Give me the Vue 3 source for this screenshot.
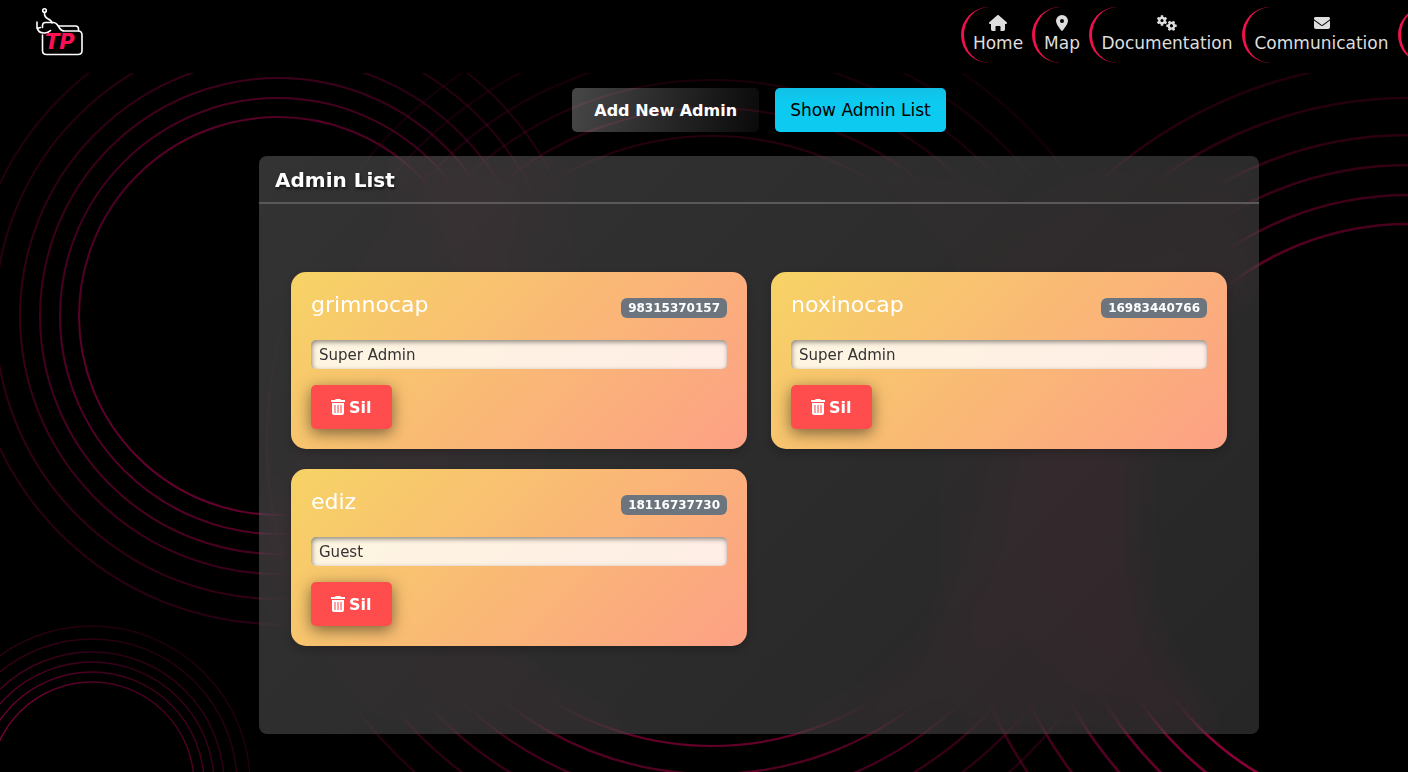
<script setup>
import { ref } from 'vue'

const rings = [
  { cx: 278, cy: 316, w: 2, paint: 'url(#glow-left)', radii: [199, 218, 238, 258, 283, 308] },
  { cx: 92, cy: 784, w: 1.4, paint: 'url(#glow-low)', radii: [102, 112, 122, 132, 145, 158] },
  { cx: 1408, cy: 519, w: 2.6, paint: 'url(#glow-right)', radii: [295, 324, 354, 384, 421, 457] },
  { cx: 712, cy: 441, w: 2.2, paint: 'url(#glow-mid)', radii: [305, 333, 361, 388, 415, 445] },
]
const fade = [1, 0.85, 0.72, 0.6, 0.5, 0.42]

const links = [
  { label: 'Home', icon: 'home' },
  { label: 'Map', icon: 'pin' },
  { label: 'Documentation', icon: 'gears' },
  { label: 'Communication', icon: 'mail' },
]

const teeth = [0, 60, 120, 180, 240, 300]

const admins = ref([
  { name: 'grimnocap', id: '98315370157', role: 'Super Admin' },
  { name: 'noxinocap', id: '16983440766', role: 'Super Admin' },
  { name: 'ediz', id: '18116737730', role: 'Guest' },
])

function removeAdmin(id) {
  admins.value = admins.value.filter((a) => a.id !== id)
}
</script>

<template>
  <div class="page">
    <svg class="backdrop" viewBox="0 0 1408 772" preserveAspectRatio="xMidYMid slice" aria-hidden="true">
      <defs>
        <linearGradient id="glow-left" x1="0.9" y1="0" x2="0.2" y2="1">
          <stop offset="0" stop-color="#65002e" stop-opacity="0.7" />
          <stop offset="0.3" stop-color="#65002e" stop-opacity="0.9" />
          <stop offset="0.55" stop-color="#65002e" stop-opacity="0.75" />
          <stop offset="1" stop-color="#6a0030" />
        </linearGradient>
        <linearGradient id="glow-low" x1="0" y1="0.3" x2="1" y2="0.5">
          <stop offset="0" stop-color="#86003c" />
          <stop offset="0.5" stop-color="#6a0030" stop-opacity="0.7" />
          <stop offset="1" stop-color="#86003c" stop-opacity="0.6" />
        </linearGradient>
        <linearGradient id="glow-right" x1="0" y1="0" x2="0" y2="1">
          <stop offset="0" stop-color="#75002f" stop-opacity="0.6" />
          <stop offset="0.12" stop-color="#75002f" stop-opacity="0.9" />
          <stop offset="0.8" stop-color="#8a0038" />
          <stop offset="1" stop-color="#8a0038" />
        </linearGradient>
        <linearGradient id="glow-mid" x1="0" y1="0" x2="0" y2="1">
          <stop offset="0" stop-color="#5c0025" stop-opacity="0.4" />
          <stop offset="0.15" stop-color="#5c0025" stop-opacity="0.5" />
          <stop offset="1" stop-color="#620029" />
        </linearGradient>
      </defs>
      <g v-for="(g, i) in rings" :key="i" fill="none" :stroke="g.paint" :stroke-width="g.w">
        <circle v-for="(r, n) in g.radii" :key="r" :cx="g.cx" :cy="g.cy" :r="r" :opacity="fade[n]" />
      </g>
    </svg>

    <header class="topbar">
      <a class="brand" href="#" aria-label="TP">
        <svg width="50" height="50" viewBox="0 0 50 50" fill="none" stroke="#fff" stroke-width="1.6" stroke-linecap="round" stroke-linejoin="round">
          <circle cx="9.500" cy="3.500" r="1.800" />
          <path d="M9.500 5.500c-.3 3.500.5 4.800 3.300 6.300 2.800 1.400 4 2.200 4.200 4.200" />
          <path d="M2 15v5.500c1 4.500 4.500 5.800 8 5.500 2.500-.2 4-1 5.500-2.500M2 15v6.500l3.500-1" />
          <path d="M7.500 20.500v-2c0-2 .8-3 3-3h8c2.500 0 3 1 4 2.500l2 3c1.500 2.500 2.500 3 5 3h13.500c3 0 4 1 4 4v15.500c0 3-1 4-4 4H11.500c-3 0-4-1-4-4V28" />
          <path d="M23.500 19h17c2 0 3 1 3 3v1.500" />
          <text class="brand-text" x="10" y="42">TP</text>
        </svg>
      </a>
      <nav class="menu" aria-label="Main">
        <a v-for="l in links" :key="l.label" class="menu-item" href="#">
          <svg v-if="l.icon === 'home'" width="18" height="16" viewBox="0 0 18 16" fill="currentColor">
            <path d="M8.300.3c.4-.4 1-.4 1.400 0l8 7c.6.600.3 1.700-.7 1.700h-1v5.300c0 1-.7 1.700-1.700 1.700H11.500v-4c0-.6-.4-1-1-1h-3c-.6 0-1 .4-1 1v4H3.700C2.700 16 2 15.300 2 14.300V9H1C0 9-.3 7.900.3 7.300z" />
          </svg>
          <svg v-else-if="l.icon === 'pin'" width="12" height="16" viewBox="0 0 12 16" fill="currentColor">
            <path fill-rule="evenodd" d="M6 0a6 6 0 0 1 6 6c0 2.700-3.600 7.400-5.300 9.600a.9.9 0 0 1-1.400 0C3.600 13.400 0 8.700 0 6a6 6 0 0 1 6-6zm0 4a2 2 0 1 0 0 4 2 2 0 0 0 0-4z" />
          </svg>
          <svg v-else-if="l.icon === 'gears'" width="20" height="16" viewBox="0 0 20 16">
            <g v-for="(c, k) in [[5, 5.5], [14.5, 10.8]]" :key="k" :transform="`translate(${c[0]} ${c[1]}) rotate(${k * 30})`">
              <rect v-for="t in teeth" :key="t" x="-1.3" y="-5.2" width="2.600" height="3" rx="0.500" :transform="`rotate(${t})`" fill="currentColor" />
              <circle r="2.700" fill="none" stroke="currentColor" stroke-width="2.200" />
            </g>
          </svg>
          <svg v-else width="16" height="16" viewBox="0 0 16 16" fill="currentColor">
            <path d="M1.500 2h13c.9 0 1.500.6 1.500 1.500 0 .5-.2.900-.6 1.200L8.600 9.800c-.4.300-.8.300-1.200 0L.6 4.700C.2 4.400 0 4 0 3.500 0 2.600.6 2 1.500 2z" />
            <path d="M0 5.500l6.800 5.100c.7.500 1.700.5 2.400 0L16 5.500V12c0 1.200-.8 2-2 2H2c-1.200 0-2-.8-2-2z" />
          </svg>
          <span>{{ l.label }}</span>
        </a>
        <a class="menu-item" href="#" aria-label="More"></a>
      </nav>
    </header>

    <main class="content">
      <div class="actions">
        <button type="button" class="btn btn-dark">Add New Admin</button>
        <button type="button" class="btn btn-info">Show Admin List</button>
      </div>

      <section class="panel">
        <h1 class="panel-title">Admin List</h1>
        <div class="cards">
          <article v-for="a in admins" :key="a.id" class="card">
            <div class="card-head">
              <h2 class="card-name">{{ a.name }}</h2>
              <span class="badge">{{ a.id }}</span>
            </div>
            <input v-model="a.role" class="role" type="text" readonly :aria-label="`Role of ${a.name}`" />
            <button type="button" class="remove" @click="removeAdmin(a.id)">
              <svg width="14" height="16" viewBox="0 0 14 16" fill="#fff" aria-hidden="true">
                <path d="M4.700 0h4.600l.7 1h4v2H0V1h4z" />
                <path d="M1 4h12v10c0 1.200-.8 2-2 2H3c-1.200 0-2-.8-2-2z" />
                <path d="M3 6h2v8H3zM6 6h2v8H6zM9 6h2v8H9z" fill="#ffa0a0" />
              </svg>
              Sil
            </button>
          </article>
        </div>
      </section>
    </main>
  </div>
</template>

<style>
html,
body {
  margin: 0;
  background: #000;
}
</style>

<style scoped>
.page {
  position: relative;
  min-height: 100vh;
  overflow: hidden;
  background: #000;
  font-family: 'DejaVu Sans', Verdana, sans-serif;
  font-size: 17px;
  color: #fff;
}
.page * {
  box-sizing: border-box;
}
.backdrop {
  position: absolute;
  inset: 0;
  width: 100%;
  height: 100%;
}
.topbar {
  position: relative;
  display: flex;
  align-items: flex-start;
  justify-content: space-between;
  height: 73px;
  padding: 7px 0 0 35px;
  background: #000;
}
.brand svg {
  display: block;
}
.brand-text {
  font-size: 21px;
  font-weight: 700;
  font-style: italic;
  fill: #ff0f55;
  stroke: none;
}
.menu {
  flex: 0 0 447px;
  display: grid;
  grid-template-columns: 71px 57px 153px 156px 80px;
  overflow: hidden;
}
.menu-item {
  display: flex;
  flex-direction: column;
  align-items: center;
  height: 56px;
  padding: 8px 8px 0;
  border-left: 3px solid #f0114c;
  border-radius: 50px;
  line-height: 24px;
  color: #dedede;
  text-decoration: none;
}
.menu-item svg {
  flex: none;
}
.content {
  position: relative;
  padding: 15px 0 38px 110px;
}
.actions {
  display: flex;
  justify-content: center;
  gap: 16px;
  margin-bottom: 24px;
}
.btn {
  height: 44px;
  border: 0;
  border-radius: 5px;
  font-family: inherit;
}
.btn-dark {
  padding: 0 22px;
  background: linear-gradient(100deg, rgba(255, 255, 255, 0.28), rgba(255, 255, 255, 0.04));
  font-size: 16px;
  font-weight: 700;
  color: #fff;
}
.btn-info {
  padding: 0 15px;
  background: linear-gradient(#12bfe6, #0dcaf0 30%);
  font-size: 17px;
  color: #000;
}
.panel {
  max-width: 1000px;
  margin: 0 auto;
  border-radius: 8px;
  background: linear-gradient(135deg, rgba(255, 255, 255, 0.2), rgba(255, 255, 255, 0.15));
  backdrop-filter: blur(20px);
}
.panel-title {
  margin: 0;
  padding: 11px 16px 9px;
  border-bottom: 2px solid #5a5859;
  font-size: 20px;
  line-height: 26px;
  font-weight: 700;
  text-shadow: 1px 2px 3px rgba(0, 0, 0, 0.6);
}
.cards {
  display: grid;
  grid-template-columns: 1fr 1fr;
  gap: 20px 24px;
  padding: 68px 32px 88px;
}
.card {
  padding: 20px;
  border-radius: 15px;
  background: linear-gradient(135deg, #f6d365, #fda085);
  box-shadow: 0 4px 8px rgba(0, 0, 0, 0.2);
}
.card-head {
  display: flex;
  justify-content: space-between;
  align-items: flex-end;
  margin-bottom: 22px;
}
.card-name {
  margin: 0;
  font-size: 22px;
  line-height: 26px;
  font-weight: 400;
}
.badge {
  padding: 0 7px;
  border-radius: 6px;
  background: #6c757d;
  font-size: 12px;
  line-height: 20px;
  font-weight: 700;
}
.role {
  display: block;
  width: 100%;
  height: 29px;
  margin-bottom: 16px;
  padding: 0 8px;
  border: 0;
  border-radius: 5px;
  background: rgba(255, 255, 255, 0.8);
  box-shadow: inset 1px 2px 5px rgba(0, 0, 0, 0.45);
  font-family: inherit;
  font-size: 15px;
  color: #333;
}
.remove {
  display: flex;
  align-items: center;
  gap: 4px;
  height: 44px;
  padding: 0 20px;
  border: 0;
  border-radius: 5px;
  background: #ff4d4d;
  box-shadow: 0 4px 15px rgba(0, 0, 0, 0.5);
  font-family: inherit;
  font-size: 16px;
  font-weight: 700;
  color: #fff;
}
</style>
